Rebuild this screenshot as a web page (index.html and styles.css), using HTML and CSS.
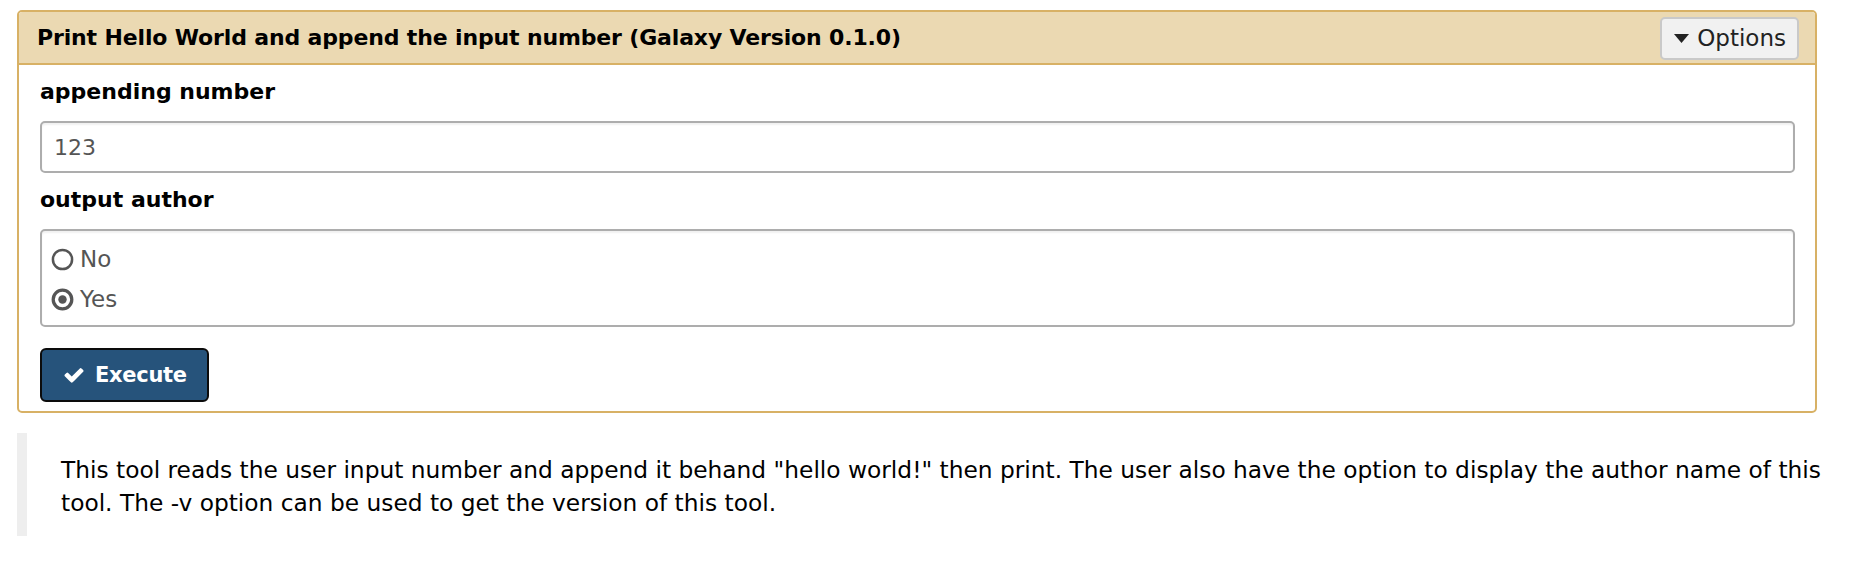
FILE: index.html
```html
<!DOCTYPE html>
<html>
<head>
<meta charset="utf-8">
<link rel="stylesheet" href="styles.css">
</head>
<body>
<div class="portlet">
  <div class="portlet-header">
    <div class="portlet-title">Print Hello World and append the input number (Galaxy Version 0.1.0)</div>
    <button class="btn-options"><svg class="caret" viewBox="0 0 10 6" width="15" height="9"><polygon points="0,0 10,0 5,6" fill="#222"/></svg>Options</button>
  </div>
  <div class="portlet-body">
    <div class="form-row">
      <div class="form-label">appending number</div>
      <div class="text-input">123</div>
    </div>
    <div class="form-row">
      <div class="form-label">output author</div>
      <div class="radio-box">
        <div class="radio-row">
          <svg class="radio-icon" viewBox="0 0 24 24" width="23" height="23"><circle cx="12" cy="12" r="10" fill="none" stroke="#555" stroke-width="2.6"/></svg>
          <span>No</span>
        </div>
        <div class="radio-row">
          <svg class="radio-icon" viewBox="0 0 24 24" width="23" height="23"><circle cx="12" cy="12" r="9.7" fill="none" stroke="#555" stroke-width="3.4"/><circle cx="12" cy="12" r="4.4" fill="#555"/></svg>
          <span>Yes</span>
        </div>
      </div>
    </div>
    <button class="btn-execute"><svg class="check" viewBox="0 0 1792 1792" width="22" height="22"><path fill="#fff" d="M1671 566q0 40-28 68l-724 724-136 136q-28 28-68 28t-68-28l-136-136-362-362q-28-28-28-68t28-68l136-136q28-28 68-28t68 28l294 295 656-657q28-28 68-28t68 28l136 136q28 28 28 68z"/></svg>Execute</button>
  </div>
</div>
<div class="help">
  <p>This tool reads the user input number and append it behand "hello world!" then print. The user also have the option to display the author name of this tool. The -v option can be used to get the version of this tool.</p>
</div>
</body>
</html>
```

FILE: styles.css
```css
html, body {
  margin: 0;
  padding: 0;
  background: #fff;
}
body {
  padding: 10px 35px 0 17px;
  font-family: "DejaVu Sans", Verdana, sans-serif;
  color: #000;
}
.portlet {
  border: 2px solid #d8b165;
  border-radius: 5px;
  background: #fff;
}
.portlet-header {
  background: #ebd9b2;
  border-bottom: 2px solid #d8b165;
  height: 51px;
  display: flex;
  align-items: center;
  justify-content: space-between;
  padding: 0 16px 0 18px;
  border-radius: 3px 3px 0 0;
}
.portlet-title {
  font-weight: bold;
  font-size: 22px;
  letter-spacing: -0.15px;
  color: #000;
}
.btn-options {
  display: flex;
  align-items: center;
  height: 43px;
  padding: 0 11px 0 12px;
  background: #f1f1f1;
  border: 2px solid #c9c9c9;
  border-radius: 5px;
  font-family: "DejaVu Sans", Verdana, sans-serif;
  font-size: 23px;
  color: #222;
  margin-top: 1px;
}
.caret {
  margin-right: 8px;
}
.portlet-body {
  padding: 12px 20px 9px 21px;
  display: flex;
  flex-direction: column;
}
.form-row {
  margin-bottom: 12px;
}
.form-label {
  font-weight: bold;
  font-size: 22px;
  line-height: 30px;
  margin-bottom: 14px;
}
.text-input {
  height: 48px;
  border: 2px solid #adadad;
  border-radius: 5px;
  box-shadow: inset 0 2px 2px rgba(0,0,0,0.06);
  display: flex;
  align-items: center;
  padding-left: 12px;
  font-size: 22px;
  color: #555;
}
.radio-box {
  border: 2px solid #adadad;
  border-radius: 5px;
  box-shadow: inset 0 2px 2px rgba(0,0,0,0.06);
  padding: 8px 10px 8px 9px;
  height: 78px;
}
.radio-row {
  display: flex;
  align-items: center;
  height: 40px;
  font-size: 23px;
  color: #555;
}
.radio-icon {
  margin-right: 6px;
}
.btn-execute {
  align-self: flex-start;
  margin-top: 9px;
  display: flex;
  align-items: center;
  height: 54px;
  width: 169px;
  padding: 0 0 0 21px;
  background: #26537b;
  border: 2px solid #0c0c0c;
  border-radius: 6px;
  color: #fff;
  font-family: "DejaVu Sans", Verdana, sans-serif;
  font-weight: bold;
  font-size: 21px;
  letter-spacing: -0.3px;
}
.check {
  margin-right: 10px;
}
.help {
  margin-top: 20px;
  margin-right: -16px;
  border-left: 10px solid #eeeeee;
  padding: 20px 0 17px 34px;
}
.help p {
  margin: 0;
  font-size: 23.3px;
  line-height: 33px;
}
```
